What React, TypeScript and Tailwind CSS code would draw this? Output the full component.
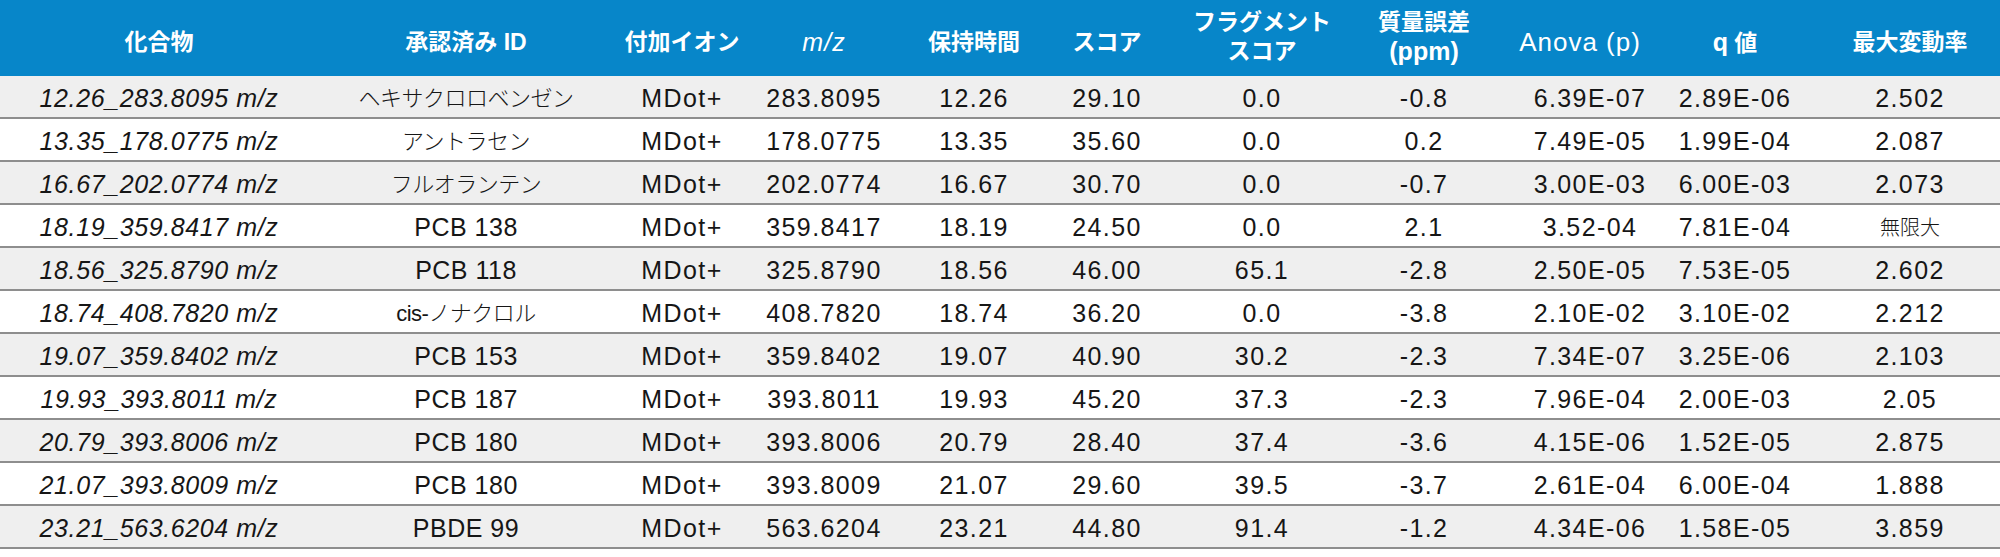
import React from "react"

const cols = [
  "pl-[6px]",
  "pl-[46px]",
  "pl-[37px]",
  "pr-[4px]",
  "pl-[9px]",
  "pr-[10px]",
  "pr-[3px]",
  "pr-[2px]",
  "pl-[11px]",
  "pr-[14px]",
  "pr-[2px]",
]

const rows = [
  ["12.26", "283.8095", "ヘキサクロロベンゼン", "29.10", "0.0", "-0.8", "6.39E-07", "2.89E-06", "2.502"],
  ["13.35", "178.0775", "アントラセン", "35.60", "0.0", "0.2", "7.49E-05", "1.99E-04", "2.087"],
  ["16.67", "202.0774", "フルオランテン", "30.70", "0.0", "-0.7", "3.00E-03", "6.00E-03", "2.073"],
  ["18.19", "359.8417", "PCB 138", "24.50", "0.0", "2.1", "3.52-04", "7.81E-04", "無限大"],
  ["18.56", "325.8790", "PCB 118", "46.00", "65.1", "-2.8", "2.50E-05", "7.53E-05", "2.602"],
  ["18.74", "408.7820", "cis-ノナクロル", "36.20", "0.0", "-3.8", "2.10E-02", "3.10E-02", "2.212"],
  ["19.07", "359.8402", "PCB 153", "40.90", "30.2", "-2.3", "7.34E-07", "3.25E-06", "2.103"],
  ["19.93", "393.8011", "PCB 187", "45.20", "37.3", "-2.3", "7.96E-04", "2.00E-03", "2.05"],
  ["20.79", "393.8006", "PCB 180", "28.40", "37.4", "-3.6", "4.15E-06", "1.52E-05", "2.875"],
  ["21.07", "393.8009", "PCB 180", "29.60", "39.5", "-3.7", "2.61E-04", "6.00E-04", "1.888"],
  ["23.21", "563.6204", "PBDE 99", "44.80", "91.4", "-1.2", "4.34E-06", "1.58E-05", "3.859"],
]

const grid =
  "grid grid-cols-[312px_262px_179px_146px_141px_144px_159px_164px_155px_160px_178px]"

function Head({ i, children, two }: { i: number; children: React.ReactNode; two?: boolean }) {
  return (
    <div
      className={`flex flex-col items-center justify-center text-center leading-[29px] ${
        two ? "pb-[2px]" : "pt-[9px]"
      } ${cols[i]}`}
    >
      {children}
    </div>
  )
}

function Cell({ i, children, className = "" }: { i: number; children: React.ReactNode; className?: string }) {
  return (
    <div className={`flex items-center justify-center pt-[4px] whitespace-nowrap ${cols[i]} ${className}`}>
      {children}
    </div>
  )
}

export default function App() {
  return (
    <div className="w-[2000px] h-[557px] bg-white font-['Liberation_Sans','Noto_Sans_CJK_JP',sans-serif] text-[#161616]">
      <div className={`${grid} h-[76px] bg-[#0786c9] text-white text-[23px] font-bold`}>
        <Head i={0}>化合物</Head>
        <Head i={1}>承認済み ID</Head>
        <Head i={2}>付加イオン</Head>
        <Head i={3}>
          <span className="italic font-normal text-[25px] tracking-[1px]">m/z</span>
        </Head>
        <Head i={4}>保持時間</Head>
        <Head i={5}>スコア</Head>
        <Head i={6} two>
          <span>フラグメント</span>
          <span>スコア</span>
        </Head>
        <Head i={7} two>
          <span>質量誤差</span>
          <span className="text-[25px]">(ppm)</span>
        </Head>
        <Head i={8}>
          <span className="font-normal text-[26px] tracking-[1px] pr-[20px]">Anova (p)</span>
        </Head>
        <Head i={9}>
          <span>
            <span className="text-[25px]">q</span> 値
          </span>
        </Head>
        <Head i={10}>最大変動率</Head>
      </div>
      {rows.map((r, idx) => (
        <div
          key={idx}
          className={`${grid} h-[43px] border-b-2 border-[#8e8e8e] text-[25px] tracking-[1.4px] ${
            idx % 2 === 0 ? "bg-[#efefef]" : "bg-white"
          }`}
        >
          <Cell i={0} className="italic tracking-[0.6px]">
            {r[0]}_{r[1]} m/z
          </Cell>
          <Cell
            i={1}
            className={/^[A-Za-z]/.test(r[2]) && !r[2].startsWith("cis") ? "tracking-[0.5px]" : "text-[22px] font-light tracking-[-0.5px]"}
          >
            {r[2]}
          </Cell>
          <Cell i={2}>MDot+</Cell>
          <Cell i={3}>{r[1]}</Cell>
          <Cell i={4}>{r[0]}</Cell>
          <Cell i={5}>{r[3]}</Cell>
          <Cell i={6}>{r[4]}</Cell>
          <Cell i={7}>{r[5]}</Cell>
          <Cell i={8}>{r[6]}</Cell>
          <Cell i={9}>{r[7]}</Cell>
          <Cell i={10} className={r[8] === "無限大" ? "text-[20px] font-light tracking-[0px]" : ""}>
            {r[8]}
          </Cell>
        </div>
      ))}
    </div>
  )
}
